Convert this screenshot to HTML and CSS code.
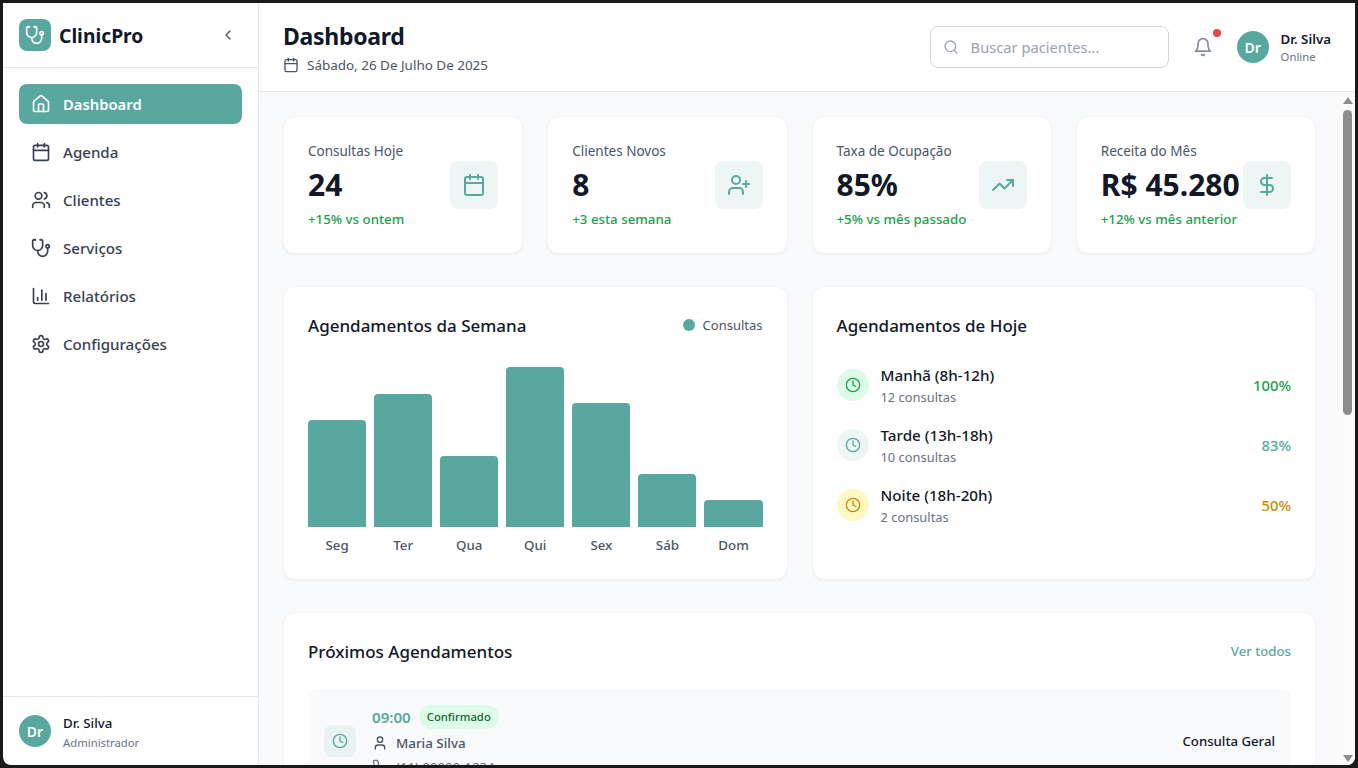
FILE: index.html
```html
<!DOCTYPE html>
<html lang="pt-BR">
<head>
    <meta charset="UTF-8">
    <meta name="viewport" content="width=device-width, initial-scale=1.0">
    <title>ClinicPro - Dashboard</title>
    <link rel="stylesheet" href="styles.css">
</head>
<body>
    <svg class="sprite" xmlns="http://www.w3.org/2000/svg">
        <symbol id="i-stethoscope" viewBox="0 0 24 24"><path d="M4.8 2.3A.3.3 0 1 0 5 2H4a2 2 0 0 0-2 2v5a6 6 0 0 0 6 6 6 6 0 0 0 6-6V4a2 2 0 0 0-2-2h-1a.2.2 0 1 0 .3.3"/><path d="M8 15v1a6 6 0 0 0 6 6 6 6 0 0 0 6-6v-4"/><circle cx="20" cy="10" r="2"/></symbol>
        <symbol id="i-home" viewBox="0 0 24 24"><path d="M15 21v-8a1 1 0 0 0-1-1h-4a1 1 0 0 0-1 1v8"/><path d="M3 10a2 2 0 0 1 .709-1.528l7-5.999a2 2 0 0 1 2.582 0l7 5.999A2 2 0 0 1 21 10v9a2 2 0 0 1-2 2H5a2 2 0 0 1-2-2z"/></symbol>
        <symbol id="i-calendar" viewBox="0 0 24 24"><path d="M8 2v4"/><path d="M16 2v4"/><rect width="18" height="18" x="3" y="4" rx="2"/><path d="M3 10h18"/></symbol>
        <symbol id="i-users" viewBox="0 0 24 24"><path d="M16 21v-2a4 4 0 0 0-4-4H6a4 4 0 0 0-4 4v2"/><circle cx="9" cy="7" r="4"/><path d="M22 21v-2a4 4 0 0 0-3-3.87"/><path d="M16 3.13a4 4 0 0 1 0 7.75"/></symbol>
        <symbol id="i-chart" viewBox="0 0 24 24"><path d="M3 3v16a2 2 0 0 0 2 2h16"/><path d="M18 17V9"/><path d="M13 17V5"/><path d="M8 17v-3"/></symbol>
        <symbol id="i-settings" viewBox="0 0 24 24"><path d="M12.22 2h-.44a2 2 0 0 0-2 2v.18a2 2 0 0 1-1 1.73l-.43.25a2 2 0 0 1-2 0l-.15-.08a2 2 0 0 0-2.73.73l-.22.38a2 2 0 0 0 .73 2.73l.15.1a2 2 0 0 1 1 1.72v.51a2 2 0 0 1-1 1.74l-.15.09a2 2 0 0 0-.73 2.73l.22.38a2 2 0 0 0 2.73.73l.15-.08a2 2 0 0 1 2 0l.43.25a2 2 0 0 1 1 1.73V20a2 2 0 0 0 2 2h.44a2 2 0 0 0 2-2v-.18a2 2 0 0 1 1-1.73l.43-.25a2 2 0 0 1 2 0l.15.08a2 2 0 0 0 2.73-.73l.22-.39a2 2 0 0 0-.73-2.73l-.15-.08a2 2 0 0 1-1-1.74v-.5a2 2 0 0 1 1-1.74l.15-.09a2 2 0 0 0 .73-2.73l-.22-.38a2 2 0 0 0-2.73-.73l-.15.08a2 2 0 0 1-2 0l-.43-.25a2 2 0 0 1-1-1.73V4a2 2 0 0 0-2-2z"/><circle cx="12" cy="12" r="3"/></symbol>
        <symbol id="i-chevron" viewBox="0 0 24 24"><path d="m15 18-6-6 6-6"/></symbol>
        <symbol id="i-search" viewBox="0 0 24 24"><circle cx="11" cy="11" r="8"/><path d="m21 21-4.3-4.3"/></symbol>
        <symbol id="i-bell" viewBox="0 0 24 24"><path d="M6 8a6 6 0 0 1 12 0c0 7 3 9 3 9H3s3-2 3-9"/><path d="M10.3 21a1.94 1.94 0 0 0 3.4 0"/></symbol>
        <symbol id="i-user-plus" viewBox="0 0 24 24"><path d="M16 21v-2a4 4 0 0 0-4-4H6a4 4 0 0 0-4 4v2"/><circle cx="9" cy="7" r="4"/><path d="M19 8v6"/><path d="M22 11h-6"/></symbol>
        <symbol id="i-trending" viewBox="0 0 24 24"><polyline points="22 7 13.5 15.5 8.5 10.5 2 17"/><polyline points="16 7 22 7 22 13"/></symbol>
        <symbol id="i-dollar" viewBox="0 0 24 24"><path d="M12 2v20"/><path d="M17 5H9.5a3.5 3.5 0 0 0 0 7h5a3.5 3.5 0 0 1 0 7H6"/></symbol>
        <symbol id="i-clock" viewBox="0 0 24 24"><circle cx="12" cy="12" r="10"/><polyline points="12 6 12 12 16 14"/></symbol>
        <symbol id="i-user" viewBox="0 0 24 24"><path d="M19 21v-2a4 4 0 0 0-4-4H9a4 4 0 0 0-4 4v2"/><circle cx="12" cy="7" r="4"/></symbol>
        <symbol id="i-phone" viewBox="0 0 24 24"><path d="M22 16.92v3a2 2 0 0 1-2.18 2 19.79 19.79 0 0 1-8.63-3.07 19.5 19.5 0 0 1-6-6 19.79 19.79 0 0 1-3.07-8.67A2 2 0 0 1 4.11 2h3a2 2 0 0 1 2 1.72 12.84 12.84 0 0 0 .7 2.81 2 2 0 0 1-.45 2.11L8.09 9.91a16 16 0 0 0 6 6l1.27-1.27a2 2 0 0 1 2.11-.45 12.84 12.84 0 0 0 2.81.7A2 2 0 0 1 22 16.92z"/></symbol>
    </svg>

    <div class="window">
        <aside class="sidebar">
            <div class="brand">
                <span class="brand-logo"><svg class="icon icon-20"><use href="#i-stethoscope"/></svg></span>
                <span class="brand-name">ClinicPro</span>
                <button class="collapse-btn"><svg class="icon icon-16"><use href="#i-chevron"/></svg></button>
            </div>
            <nav class="nav">
                <a class="nav-item active" href="#"><svg class="icon icon-20"><use href="#i-home"/></svg>Dashboard</a>
                <a class="nav-item" href="#"><svg class="icon icon-20"><use href="#i-calendar"/></svg>Agenda</a>
                <a class="nav-item" href="#"><svg class="icon icon-20"><use href="#i-users"/></svg>Clientes</a>
                <a class="nav-item" href="#"><svg class="icon icon-20"><use href="#i-stethoscope"/></svg>Serviços</a>
                <a class="nav-item" href="#"><svg class="icon icon-20"><use href="#i-chart"/></svg>Relatórios</a>
                <a class="nav-item" href="#"><svg class="icon icon-20"><use href="#i-settings"/></svg>Configurações</a>
            </nav>
            <div class="sidebar-user">
                <span class="avatar">Dr</span>
                <div class="sidebar-user-text">
                    <div class="sidebar-user-name">Dr. Silva</div>
                    <div class="sidebar-user-role">Administrador</div>
                </div>
            </div>
        </aside>

        <div class="page">
            <header class="topbar">
                <div class="topbar-title">
                    <h1>Dashboard</h1>
                    <div class="topbar-date"><svg class="icon icon-16"><use href="#i-calendar"/></svg>Sábado, 26 De Julho De 2025</div>
                </div>
                <div class="topbar-right">
                    <label class="search">
                        <svg class="icon icon-16"><use href="#i-search"/></svg>
                        <input type="text" placeholder="Buscar pacientes...">
                    </label>
                    <button class="bell"><svg class="icon icon-20"><use href="#i-bell"/></svg><span class="bell-dot"></span></button>
                    <div class="topbar-user">
                        <span class="avatar">Dr</span>
                        <div class="topbar-user-text">
                            <div class="topbar-user-name">Dr. Silva</div>
                            <div class="topbar-user-status">Online</div>
                        </div>
                    </div>
                </div>
            </header>

            <div class="page-body">
                <main class="content">
                    <section class="stats">
                        <div class="card stat">
                            <div>
                                <div class="stat-label">Consultas Hoje</div>
                                <div class="stat-value">24</div>
                                <div class="stat-delta">+15% vs ontem</div>
                            </div>
                            <span class="stat-icon"><svg class="icon icon-24"><use href="#i-calendar"/></svg></span>
                        </div>
                        <div class="card stat">
                            <div>
                                <div class="stat-label">Clientes Novos</div>
                                <div class="stat-value">8</div>
                                <div class="stat-delta">+3 esta semana</div>
                            </div>
                            <span class="stat-icon"><svg class="icon icon-24"><use href="#i-user-plus"/></svg></span>
                        </div>
                        <div class="card stat">
                            <div>
                                <div class="stat-label">Taxa de Ocupação</div>
                                <div class="stat-value">85%</div>
                                <div class="stat-delta">+5% vs mês passado</div>
                            </div>
                            <span class="stat-icon"><svg class="icon icon-24"><use href="#i-trending"/></svg></span>
                        </div>
                        <div class="card stat">
                            <div>
                                <div class="stat-label">Receita do Mês</div>
                                <div class="stat-value">R$ 45.280</div>
                                <div class="stat-delta">+12% vs mês anterior</div>
                            </div>
                            <span class="stat-icon"><svg class="icon icon-24"><use href="#i-dollar"/></svg></span>
                        </div>
                    </section>

                    <section class="panels">
                        <div class="card panel">
                            <div class="panel-head">
                                <h2>Agendamentos da Semana</h2>
                                <span class="legend"><span class="legend-dot"></span>Consultas</span>
                            </div>
                            <div class="chart">
                                <div class="chart-col"><div class="chart-track"><div class="chart-bar" style="height: 66.7%"></div></div><span>Seg</span></div>
                                <div class="chart-col"><div class="chart-track"><div class="chart-bar" style="height: 83.3%"></div></div><span>Ter</span></div>
                                <div class="chart-col"><div class="chart-track"><div class="chart-bar" style="height: 44.4%"></div></div><span>Qua</span></div>
                                <div class="chart-col"><div class="chart-track"><div class="chart-bar" style="height: 100%"></div></div><span>Qui</span></div>
                                <div class="chart-col"><div class="chart-track"><div class="chart-bar" style="height: 77.8%"></div></div><span>Sex</span></div>
                                <div class="chart-col"><div class="chart-track"><div class="chart-bar" style="height: 33.3%"></div></div><span>Sáb</span></div>
                                <div class="chart-col"><div class="chart-track"><div class="chart-bar" style="height: 16.7%"></div></div><span>Dom</span></div>
                            </div>
                        </div>
                        <div class="card panel">
                            <div class="panel-head">
                                <h2>Agendamentos de Hoje</h2>
                            </div>
                            <div class="shifts">
                                <div class="shift">
                                    <span class="shift-icon green"><svg class="icon icon-16"><use href="#i-clock"/></svg></span>
                                    <div class="shift-text">
                                        <div class="shift-name">Manhã (8h-12h)</div>
                                        <div class="shift-count">12 consultas</div>
                                    </div>
                                    <span class="shift-pct text-green">100%</span>
                                </div>
                                <div class="shift">
                                    <span class="shift-icon teal"><svg class="icon icon-16"><use href="#i-clock"/></svg></span>
                                    <div class="shift-text">
                                        <div class="shift-name">Tarde (13h-18h)</div>
                                        <div class="shift-count">10 consultas</div>
                                    </div>
                                    <span class="shift-pct text-teal">83%</span>
                                </div>
                                <div class="shift">
                                    <span class="shift-icon yellow"><svg class="icon icon-16"><use href="#i-clock"/></svg></span>
                                    <div class="shift-text">
                                        <div class="shift-name">Noite (18h-20h)</div>
                                        <div class="shift-count">2 consultas</div>
                                    </div>
                                    <span class="shift-pct text-yellow">50%</span>
                                </div>
                            </div>
                        </div>
                    </section>

                    <section class="card panel">
                        <div class="panel-head">
                            <h2>Próximos Agendamentos</h2>
                            <a class="see-all" href="#">Ver todos</a>
                        </div>
                        <div class="upcoming">
                            <div class="appt">
                                <span class="appt-icon"><svg class="icon icon-16"><use href="#i-clock"/></svg></span>
                                <div class="appt-info">
                                    <div class="appt-top"><span class="appt-time">09:00</span><span class="badge">Confirmado</span></div>
                                    <div class="appt-name"><svg class="icon icon-16"><use href="#i-user"/></svg>Maria Silva</div>
                                    <div class="appt-phone"><svg class="icon icon-16"><use href="#i-phone"/></svg>(11) 99999-1234</div>
                                </div>
                                <span class="appt-type">Consulta Geral</span>
                            </div>
                            <div class="appt">
                                <span class="appt-icon"><svg class="icon icon-16"><use href="#i-clock"/></svg></span>
                                <div class="appt-info">
                                    <div class="appt-top"><span class="appt-time">10:30</span><span class="badge">Confirmado</span></div>
                                    <div class="appt-name"><svg class="icon icon-16"><use href="#i-user"/></svg>João Santos</div>
                                    <div class="appt-phone"><svg class="icon icon-16"><use href="#i-phone"/></svg>(11) 98888-5678</div>
                                </div>
                                <span class="appt-type">Retorno</span>
                            </div>
                        </div>
                    </section>
                </main>

                <!-- scrollbar drawn by hand, the native one does not show in the capture -->
                <div class="scrollbar">
                    <span class="scroll-up"></span>
                    <div class="scroll-track"><div class="scroll-thumb"></div></div>
                    <span class="scroll-down"></span>
                </div>
            </div>
        </div>
    </div>
</body>
</html>
```

FILE: styles.css
```css
* {
    box-sizing: border-box;
}
html, body {
    height: 100%;
    margin: 0;
    overflow: hidden;
}
body {
    font-family: "Noto Sans", Arial, sans-serif;
    background-color: #1a1a1a;
    color: #111827;
}
h1, h2 {
    margin: 0;
}
a {
    text-decoration: none;
    color: inherit;
}
button {
    background: none;
    border: none;
    padding: 0;
    cursor: pointer;
}
.sprite {
    display: none;
}
.icon {
    display: block;
    flex: none;
    fill: none;
    stroke: currentColor;
    stroke-width: 2;
    stroke-linecap: round;
    stroke-linejoin: round;
}
.icon-16 { width: 16px; height: 16px; }
.icon-20 { width: 20px; height: 20px; }
.icon-24 { width: 24px; height: 24px; }

.window {
    display: flex;
    height: 762px;
    margin: 3px;
    background-color: #fff;
    border-radius: 0 0 8px 8px;
    overflow: hidden;
}

/* sidebar */
.sidebar {
    display: flex;
    flex-direction: column;
    flex: none;
    width: 256px;
    border-right: 1px solid #e5e7eb;
}
.brand {
    display: flex;
    align-items: center;
    height: 65px;
    padding: 0 16px;
    border-bottom: 1px solid #e5e7eb;
}
.brand-logo {
    display: flex;
    align-items: center;
    justify-content: center;
    width: 32px;
    height: 32px;
    border-radius: 8px;
    background-color: #58a8a0;
    color: #fff;
}
.brand-name {
    margin-left: 8px;
    font-size: 19.3px;
    font-weight: 700;
}
.collapse-btn {
    margin-left: auto;
    margin-right: 6px;
    color: #4b5563;
}
.nav {
    flex: 1;
    display: flex;
    flex-direction: column;
    gap: 8px;
    padding: 16px;
}
.nav-item {
    display: flex;
    align-items: center;
    gap: 12px;
    height: 40px;
    padding: 0 12px;
    border-radius: 8px;
    font-size: 15.1px;
    font-weight: 500;
    color: #374151;
}
.nav-item.active {
    background-color: #58a8a0;
    color: #fff;
    font-weight: 600;
    font-size: 14.8px;
}
.sidebar-user {
    display: flex;
    align-items: center;
    gap: 12px;
    flex: none;
    height: 69px;
    padding: 0 16px;
    border-top: 1px solid #e5e7eb;
}
.sidebar-user-text {
    margin-top: 3px;
}
.avatar {
    display: flex;
    align-items: center;
    justify-content: center;
    flex: none;
    width: 32px;
    height: 32px;
    border-radius: 50%;
    background-color: #58a8a0;
    color: #fff;
    font-size: 14px;
    font-weight: 600;
}
.sidebar-user-name {
    font-size: 13.3px;
    line-height: 19px;
    font-weight: 500;
}
.sidebar-user-role {
    font-size: 11.3px;
    line-height: 19px;
    color: #6b7280;
}

/* header */
.page {
    flex: 1;
    min-width: 0;
    display: flex;
    flex-direction: column;
}
.topbar {
    display: flex;
    align-items: center;
    justify-content: space-between;
    flex: none;
    height: 89px;
    padding: 0 24px;
    border-bottom: 1px solid #e5e7eb;
}
.topbar h1 {
    font-size: 23px;
    line-height: 31px;
    letter-spacing: -0.3px;
    font-weight: 700;
}
.topbar-date {
    display: flex;
    align-items: center;
    gap: 8px;
    margin-top: 4px;
    font-size: 13.45px;
    color: #4b5563;
}
.topbar-right {
    display: flex;
    align-items: center;
}
.search {
    display: flex;
    align-items: center;
    gap: 12px;
    width: 239px;
    height: 42px;
    padding: 0 12px;
    border: 1px solid #d1d5db;
    border-radius: 8px;
    color: #9ca3af;
}
.search input {
    width: 100%;
    border: none;
    outline: none;
    padding: 0;
    font: inherit;
    font-size: 14.7px;
}
.search input::placeholder {
    color: #9ca3af;
}
.bell {
    position: relative;
    margin-left: 24px;
    color: #868c98;
}
.bell-dot {
    position: absolute;
    top: -8px;
    right: -8px;
    width: 8px;
    height: 8px;
    border-radius: 50%;
    background-color: #ef4444;
}
.topbar-user {
    display: flex;
    align-items: center;
    gap: 12px;
    margin-left: 24px;
}
.topbar-user-text {
    margin-top: 2px;
}
.topbar-user-name {
    font-size: 13.3px;
    line-height: 18px;
    font-weight: 600;
}
.topbar-user-status {
    font-size: 11.3px;
    line-height: 18px;
    color: #6b7280;
}

/* content */
.page-body {
    flex: 1;
    min-height: 0;
    display: flex;
}
.content {
    flex: 1;
    min-width: 0;
    display: flex;
    flex-direction: column;
    gap: 32px;
    padding: 24px;
    background-color: #f9fafb;
    overflow-y: auto;
}
.scrollbar {
    flex: none;
    display: flex;
    flex-direction: column;
    align-items: center;
    width: 15px;
    padding: 5px 0 3px;
    background-color: #fbfbfb;
}
.scroll-up, .scroll-down {
    flex: none;
    width: 0;
    height: 0;
    border-left: 5px solid transparent;
    border-right: 5px solid transparent;
}
.scroll-up {
    border-bottom: 7px solid #8d8d8d;
}
.scroll-down {
    border-top: 7px solid #8d8d8d;
}
.scroll-track {
    flex: 1;
    width: 100%;
    padding: 6px 3px;
}
.scroll-thumb {
    height: 305px;
    border-radius: 5px;
    background-color: #8d8d8d;
}

.card {
    flex: none;
    background-color: #fff;
    border: 1px solid #f3f4f6;
    border-radius: 12px;
    box-shadow: 0 1px 2px rgba(0,0,0,0.05);
}
.stats {
    flex: none;
    display: grid;
    grid-template-columns: repeat(4, 1fr);
    gap: 24px;
}
.stat {
    display: flex;
    align-items: center;
    justify-content: space-between;
    height: 138px;
    padding: 0 24px;
}
.stat-label {
    font-size: 13.5px;
    line-height: 20px;
    color: #4b5563;
}
.stat-value {
    margin-top: 6px;
    font-size: 30px;
    line-height: 36px;
    font-weight: 700;
    white-space: nowrap;
}
.stat-delta {
    margin-top: 6px;
    font-size: 13.3px;
    line-height: 20px;
    font-weight: 500;
    color: #16a34a;
}
.stat-icon, .appt-icon {
    display: flex;
    align-items: center;
    justify-content: center;
    flex: none;
    border-radius: 8px;
    background-color: #eef6f5;
    color: #58a8a0;
}
.stat-icon {
    width: 48px;
    height: 48px;
}
.panels {
    flex: none;
    display: grid;
    grid-template-columns: 1fr 1fr;
    gap: 24px;
}
.panel {
    padding: 24px;
}
.panel-head {
    display: flex;
    align-items: center;
    justify-content: space-between;
    height: 28px;
}
.panel-head h2 {
    font-size: 17px;
    font-weight: 500;
}
.legend {
    display: flex;
    align-items: center;
    gap: 8px;
    font-size: 13px;
    color: #4b5563;
}
.legend-dot {
    width: 12px;
    height: 12px;
    border-radius: 50%;
    background-color: #58a8a0;
}
.chart {
    display: flex;
    gap: 8px;
    margin-top: 28px;
}
.chart-col {
    flex: 1;
    text-align: center;
    font-size: 13.3px;
    line-height: 19px;
    font-weight: 500;
    color: #4b5563;
}
.chart-track {
    display: flex;
    align-items: flex-end;
    height: 160px;
    margin-bottom: 9px;
}
.chart-bar {
    width: 100%;
    border-radius: 4px 4px 0 0;
    background-color: #58a8a0;
}
.shifts {
    display: flex;
    flex-direction: column;
    gap: 16px;
    margin-top: 24px;
}
.shift {
    display: flex;
    align-items: center;
    gap: 12px;
    height: 44px;
}
.shift-icon {
    display: flex;
    align-items: center;
    justify-content: center;
    flex: none;
    width: 32px;
    height: 32px;
    border-radius: 50%;
}
.shift-icon.green { background-color: #dcfce7; color: #16a34a; }
.shift-icon.teal { background-color: #eef6f5; color: #58a8a0; }
.shift-icon.yellow { background-color: #fef9c3; color: #ca8a04; }
.shift-text {
    flex: 1;
    margin-top: 2px;
}
.shift-name {
    font-size: 15.2px;
    line-height: 23px;
    font-weight: 500;
}
.shift-count {
    font-size: 12.9px;
    line-height: 21px;
    color: #6b7280;
}
.shift-pct {
    font-size: 14.8px;
    font-weight: 500;
}
.text-green { color: #16a34a; }
.text-teal { color: #58a8a0; }
.text-yellow { color: #ca8a04; }

.see-all {
    font-size: 13.2px;
    font-weight: 500;
    color: #58a8a0;
}
.upcoming {
    display: flex;
    flex-direction: column;
    gap: 12px;
    margin-top: 24px;
}
.appt {
    display: flex;
    align-items: center;
    gap: 16px;
    padding: 16px;
    border-radius: 8px;
    background-color: #f9fafb;
}
.appt-icon {
    width: 32px;
    height: 32px;
    background-color: #e9f3f1;
}
.appt-info {
    flex: 1;
}
.appt-top {
    display: flex;
    align-items: center;
    gap: 8px;
}
.appt-time {
    font-size: 15.1px;
    font-weight: 600;
    color: #58a8a0;
}
.badge {
    padding: 0 8px;
    height: 24px;
    line-height: 24px;
    border-radius: 12px;
    background-color: #dcfce7;
    color: #166534;
    font-size: 11.3px;
    font-weight: 500;
}
.appt-name, .appt-phone {
    display: flex;
    align-items: center;
    gap: 8px;
    color: #4b5563;
}
.appt-name {
    margin-top: 3px;
    font-size: 13.4px;
    line-height: 22px;
    font-weight: 500;
}
.appt-phone {
    margin-top: 4px;
    font-size: 13.2px;
    line-height: 18px;
    color: #6b7280;
}
.appt-type {
    font-size: 13.2px;
    font-weight: 500;
}
```
